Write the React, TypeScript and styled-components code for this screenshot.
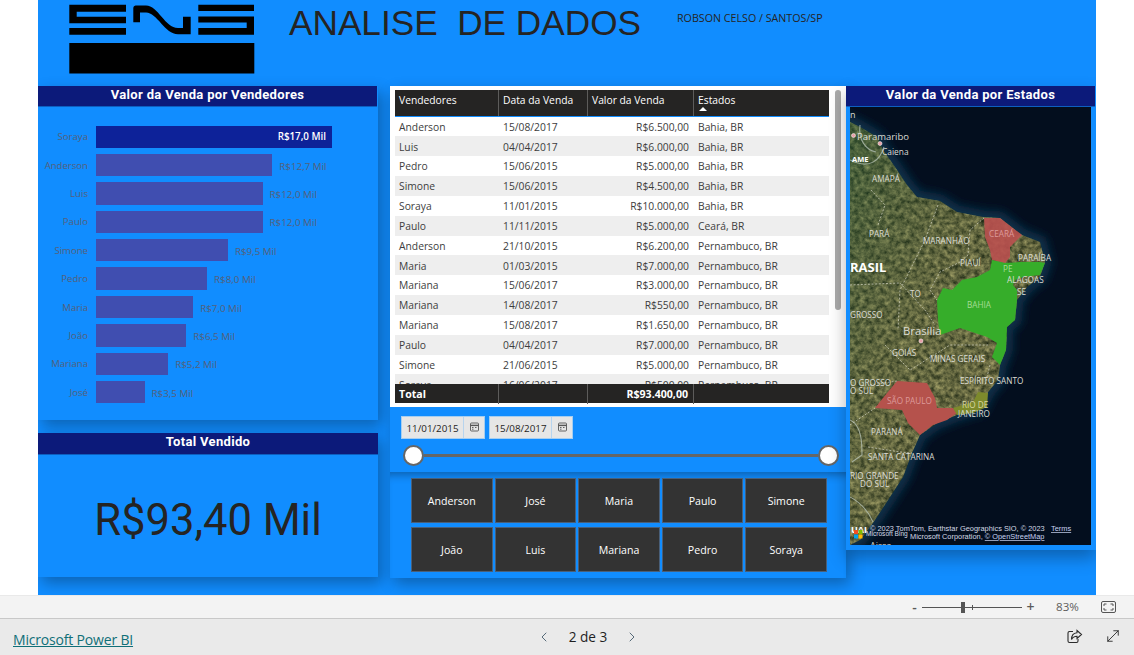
import React from "react";
import styled, { createGlobalStyle } from "styled-components";
import { ChevronLeft, ChevronRight, MoveDiagonal } from "lucide-react";

const Global = createGlobalStyle`
  html, body { margin: 0; padding: 0; background: #fff; }
  body { font-family: "Open Sans", "Liberation Sans", sans-serif; }
  * { box-sizing: border-box; }
`;

const Page = styled.div`
  width: 1134px; height: 655px; overflow: hidden; display: flex; flex-direction: column;
`;
const Canvas = styled.main`
  margin-left: 38px; width: 1058px; height: 595px; background: #118dff; flex: none; overflow: hidden;
`;
const Header = styled.header`
  height: 86px; display: flex; align-items: flex-start; padding: 4px 0 0 31px;
`;
const Logo = styled.svg`
  width: 186px; height: 70px; flex: none;
`;
const Title = styled.h1`
  margin: 0 0 0 34px; font: 400 35.2px/38px "Liberation Sans", Arial, sans-serif; color: #252423;
  white-space: pre;
`;
const Author = styled.div`
  margin: 7px 0 0 36px; font: 400 10.7px/14px "Open Sans", sans-serif; color: #252423;
`;
const Main = styled.div`
  display: flex; align-items: flex-start;
`;
const LeftColumn = styled.section`
  width: 340px; margin-right: 12px; display: flex; flex-direction: column; gap: 13px;
`;
const Card = styled.div<{ $h: number }>`
  height: ${p => p.$h}px; background: #118dff; display: flex; flex-direction: column;
  box-shadow: 4px 6px 14px rgba(0, 0, 0, .3);
`;
const CardTitle = styled.div`
  height: 21px; background: #0c1a7a; color: #fff; text-align: center; flex: none;
  font: 700 13px/18px Roboto, sans-serif; letter-spacing: .33px; border-bottom: 1px solid #0d5fc0;
  margin-right: 1px;
`;
const TotalTitle = styled(CardTitle)`
  height: 22px; margin-right: 0;
`;
const Chart = styled.div`
  padding: 18.5px 0 0 0; display: flex; flex-direction: column; gap: 6px;
`;
const BarRow = styled.div`
  height: 22.4px; display: flex; align-items: center;
`;
const BarName = styled.span`
  width: 50px; text-align: right; font: 400 9.6px/12px "Open Sans", sans-serif; color: #55607a;
  white-space: nowrap; margin-top: 1px;
`;
const Bar = styled.div<{ $top: boolean }>`
  margin-left: 8px; height: 100%; background: ${p => (p.$top ? "#0d2299" : "#404eb0")};
  display: flex; align-items: center; justify-content: flex-end; padding-right: 6px;
  font: 600 9.8px/12px "Open Sans", sans-serif; color: #fff; white-space: nowrap;
`;
const BarValue = styled.span`
  margin: 3px 0 0 7px; font: 400 9.8px/12px "Open Sans", sans-serif; color: #55607a; white-space: nowrap;
`;
const TotalValue = styled.div`
  flex: 1; display: flex; align-items: center; justify-content: center; padding-top: 9px;
  font: 400 43.5px/50px Roboto, sans-serif; color: #252423;
`;
const MiddleColumn = styled.section`
  width: 456px; flex: none; display: flex; flex-direction: column;
  box-shadow: 4px 6px 14px rgba(0, 0, 0, .3); position: relative;
`;
const TablePanel = styled.div`
  height: 321px; background: #fff; display: flex; padding: 4px 0 0 5px;
`;
const Table = styled.div`
  width: 434px; display: flex; flex-direction: column;
`;
const Rows = styled.div`
  height: 267.5px; overflow: hidden; flex: none;
`;
const gridCols = "104px 89px 106px 135px";
const HeadRow = styled.div`
  display: grid; grid-template-columns: ${gridCols}; height: 26.5px; background: #252423; flex: none;
  border-bottom: 1px solid #118dff; color: #fff;
`;
const HeadCell = styled.div<{ $last?: boolean }>`
  padding: 3px 0 0 4px; font: 400 10.3px/15px "Open Sans", sans-serif; position: relative;
  border-right: ${p => (p.$last ? "none" : "1px solid #5d5c5b")};
`;
const SortMark = styled.span`
  position: absolute; left: 5px; top: 17px; width: 0; height: 0;
  border-left: 4px solid transparent; border-right: 4px solid transparent; border-bottom: 4px solid #fff;
`;
const Row = styled.div<{ $alt: boolean }>`
  display: grid; grid-template-columns: ${gridCols}; height: 19.85px; align-items: center;
  background: ${p => (p.$alt ? "#eeeeee" : "#fff")}; color: #3d3d3d;
  font: 400 10.3px/14px "Open Sans", sans-serif; padding-top: .5px;
`;
const Cell = styled.div<{ $right?: boolean }>`
  padding: ${p => (p.$right ? "0 5px 0 0" : "0 0 0 4px")}; text-align: ${p => (p.$right ? "right" : "left")};
  white-space: nowrap;
`;
const FootRow = styled.div`
  display: grid; grid-template-columns: ${gridCols}; height: 19px; background: #252423; color: #fff; flex: none;
  font: 700 10.6px/20px "Open Sans", sans-serif;
`;
const FootCell = styled.div<{ $right?: boolean; $last?: boolean }>`
  padding: ${p => (p.$right ? "0 5px 0 0" : "0 0 0 4px")}; text-align: ${p => (p.$right ? "right" : "left")};
  border-right: ${p => (p.$last ? "none" : "1px solid #5d5c5b")};
`;
const ScrollThumb = styled.div`
  width: 6px; height: 220px; background: #a9a9a9; border-radius: 3px; margin-left: 6px; flex: none;
`;
const FilterPanel = styled.div`
  height: 65px; background: #118dff; padding: 9px 0 0 11px; display: flex; flex-direction: column;
`;
const DateRow = styled.div`
  display: flex; gap: 4px;
`;
const DateBox = styled.div`
  width: 84px; height: 23px; background: #e6e6e6; border: 1px solid #a6cef0; display: flex;
  font: 400 9.8px/21px "Open Sans", sans-serif; color: #252423;
`;
const DateText = styled.span`
  width: 62px; text-align: center; border-right: 1px solid #b7d4ee; padding-top: 1px;
`;
const CalBox = styled.span`
  flex: 1; display: flex; align-items: center; justify-content: center; padding-bottom: 2px;
`;
const SliderRow = styled.div`
  display: flex; align-items: center; margin: 5.5px 0 0 1.5px; width: 436px;
`;
const Thumb = styled.span`
  width: 21px; height: 21px; border-radius: 50%; background: #fff; border: 2px solid #666; flex: none;
`;
const Track = styled.span`
  flex: 1; height: 3px; background: #666;
`;
const ButtonPanel = styled.div`
  height: 106px; background: #118dff; padding: 6px 19px 0 21px;
  box-shadow: inset 0 9px 8px -6px rgba(0, 0, 0, .32);
`;
const ButtonGrid = styled.div`
  display: grid; grid-template-columns: repeat(5, 1fr); grid-auto-rows: 45px; column-gap: 2px; row-gap: 4px;
`;
const SlicerButton = styled.div`
  background: #333333; border: 1px solid #4a5f78; color: #fff; display: flex; align-items: center;
  justify-content: center; font: 400 10.6px/14px "Open Sans", sans-serif;
`;
const RightColumn = styled.section`
  width: 250px; flex: none; height: 464px; background: #118dff; display: flex; flex-direction: column;
  box-shadow: 0 8px 16px rgba(0, 0, 0, .3); position: relative;
`;
const MapBox = styled.div`
  height: 438px; margin: 0 5px 0 4px; overflow: hidden;
`;
const MapSvg = styled.svg`
  display: block; width: 241px; height: 438px;
`;
const ZoomBar = styled.div`
  height: 24px; background: #f3f3f3; border-top: 1px solid #e9e9e9; border-bottom: 1px solid #c8c8c8;
  display: flex; align-items: center; flex: none; padding-left: 909px; color: #605e5c;
`;
const ZoomSign = styled.span`
  width: 11px; text-align: center; font: 600 14px/14px "Open Sans", sans-serif; color: #5a5a5a;
`;
const ZoomPlus = styled(ZoomSign)`
  margin-left: 3px;
`;
const ZoomTrack = styled.span`
  width: 100px; height: 1px; background: #555; position: relative; margin-left: 2px; flex: none;
`;
const ZoomKnob = styled.span`
  position: absolute; left: 39px; top: -5px; width: 4px; height: 11px; background: #555;
`;
const ZoomTick = styled.span`
  position: absolute; left: 50px; top: -2px; width: 1px; height: 5px; background: #555;
`;
const ZoomLabel = styled.span`
  margin-left: 20px; width: 24px; font: 400 11.6px/14px "Open Sans", sans-serif; color: #605e5c;
`;
const FitIcon = styled.svg`
  margin-left: 21px; width: 15px; height: 12px;
`;
const BottomBar = styled.footer`
  flex: 1; background: #eaeaea; display: grid; grid-template-columns: 523px 104px 1fr; align-items: center;
  padding-left: 13px;
`;
const Brand = styled.a`
  font: 400 14px/18px "Open Sans", sans-serif; color: #0f6f78; text-decoration: underline; padding-top: 6px;
  letter-spacing: -.18px;
`;
const Pager = styled.div`
  display: flex; align-items: center; justify-content: space-between; color: #1f1f1f;
  font: 500 13.6px/18px "Open Sans", sans-serif;
`;
const PagerArrow = styled.span`
  display: flex; color: #4a6070;
`;
const Actions = styled.div`
  display: flex; justify-content: flex-end; gap: 21px; padding-right: 12px; align-items: center; padding-bottom: 2px;
`;

const sellers = [
  ["Soraya", 17, "R$17,0 Mil"], ["Anderson", 12.7, "R$12,7 Mil"], ["Luis", 12, "R$12,0 Mil"], ["Paulo", 12, "R$12,0 Mil"],
  ["Simone", 9.5, "R$9,5 Mil"], ["Pedro", 8, "R$8,0 Mil"], ["Maria", 7, "R$7,0 Mil"], ["João", 6.5, "R$6,5 Mil"],
  ["Mariana", 5.2, "R$5,2 Mil"], ["José", 3.5, "R$3,5 Mil"],
] as const;

const sales = [
  ["Anderson", "15/08/2017", "R$6.500,00", "Bahia, BR"], ["Luis", "04/04/2017", "R$6.000,00", "Bahia, BR"],
  ["Pedro", "15/06/2015", "R$5.000,00", "Bahia, BR"], ["Simone", "15/06/2015", "R$4.500,00", "Bahia, BR"],
  ["Soraya", "11/01/2015", "R$10.000,00", "Bahia, BR"], ["Paulo", "11/11/2015", "R$5.000,00", "Ceará, BR"],
  ["Anderson", "21/10/2015", "R$6.200,00", "Pernambuco, BR"], ["Maria", "01/03/2015", "R$7.000,00", "Pernambuco, BR"],
  ["Mariana", "15/06/2017", "R$3.000,00", "Pernambuco, BR"], ["Mariana", "14/08/2017", "R$550,00", "Pernambuco, BR"],
  ["Mariana", "15/08/2017", "R$1.650,00", "Pernambuco, BR"], ["Paulo", "04/04/2017", "R$7.000,00", "Pernambuco, BR"],
  ["Simone", "21/06/2015", "R$5.000,00", "Pernambuco, BR"], ["Soraya", "16/06/2017", "R$500,00", "Pernambuco, BR"],
];

const people = ["Anderson", "José", "Maria", "Paulo", "Simone", "João", "Luis", "Mariana", "Pedro", "Soraya"];

const landPts = "850,122 860,127 877,137 883,150 895,167 907,185 917,197 940,201 957,212 983,217 1000,218 1022,235 1040,242 1045,262 1040,277 1027,287 1017,300 1015,320 1007,327 1006,350 1000,365 998,380 988,392 980,408 957,415 937,423 920,435 912,453 903,477 890,497 877,517 870,527 860,540 850,545";

const labels: [number, number, string, number?, string?, number?][] = [
  [850, 118, "n", 9], [857, 140, "Paramaribo", 9.5], [882, 155, "Caiena", 8.4], [852, 162, "AME", 7.5, "#fff", 700], [872, 182, "AMAPÁ", 8.2],
  [869, 237, "PARÁ", 8.2], [923, 244, "MARANHÃO", 8.2], [850, 272, "RASIL", 13, "#fff", 700], [960, 266, "PIAUÍ", 8.2],
  [989, 237, "CEARÁ", 8.2, "#dd9a9a"], [1018, 261, "PARAÍBA", 8.2], [1003, 272, "PE", 8.2, "#a5dc95"], [1007, 283, "ALAGOAS", 8.2],
  [1017, 295, "SE", 8.2], [967, 308, "BAHIA", 8.2, "#a5dc95"], [910, 297, "TO", 8.2], [850, 318, "GROSSO", 8.2],
  [903, 335, "Brasília", 11.3], [892, 356, "GOIÁS", 8.2], [930, 362, "MINAS GERAIS", 8.2], [960, 384, "ESPÍRITO SANTO", 8.2],
  [850, 386, "O GROSSO", 8.2], [850, 394, "O SUL", 8.2], [887, 404, "SÃO PAULO", 8.2, "#dd9a9a"], [962, 408, "RIO DE", 8.2, "#d8d8a0"],
  [958, 417, "JANEIRO", 8.2], [871, 435, "PARANÁ", 8.2], [868, 460, "SANTA CATARINA", 8.2], [850, 479, "RIO GRANDE", 8.2], [860, 487, "DO SUL", 8.2],
  [851, 533, "UAI", 9, "#fff", 700], [870, 549, "Aires", 9],
];

const MapDrawing = () => (
  <MapSvg viewBox="850 107 241 438">
    <defs>
      <filter id="landTex" x="0" y="0" width="100%" height="100%" colorInterpolationFilters="sRGB">
        <feTurbulence type="fractalNoise" baseFrequency="0.2" numOctaves="4" seed="7" />
        <feColorMatrix values="0.8 0 0 0 0.02  0.72 0 0 0 0.06  0.5 0 0 0 0.01  0 0 0 0 1" />
        <feComposite in2="SourceAlpha" operator="in" />
      </filter>
      <filter id="seaBlur"><feGaussianBlur stdDeviation="5" /></filter>
      <linearGradient id="amazon" x1="0" y1="0" x2="1" y2="1">
        <stop offset="0" stopColor="#1c5030" stopOpacity=".5" />
        <stop offset=".4" stopColor="#35502f" stopOpacity=".2" />
        <stop offset="1" stopColor="#5a5038" stopOpacity=".1" />
      </linearGradient>
    </defs>
    <rect x="850" y="107" width="241" height="438" fill="#030e1e" />
    <polygon points={landPts} fill="none" stroke="#10304c" strokeWidth="13" filter="url(#seaBlur)" />
    <polygon points={landPts} fill="#5a6248" filter="url(#landTex)" />
    <polygon points={landPts} fill="url(#amazon)" />
    <polygon points="984,218 1000,218 1022,235 1010,247 1010,257 1005,263 992,260 990,250 985,237" fill="#b9504f" fillOpacity=".9" />
    <polygon points="992,260 1005,263 1020,262 1040,262 1045,263 1040,275 1023,277 1015,280 1013,285 1017,290 1017,300 1015,320 1007,327 1006,350 1000,365 992,357 997,343 987,337 960,328 940,335 938,320 937,300 943,288 952,290 962,280 977,277 990,270" fill="#36ad2a" />
    <polygon points="897,381 927,383 935,398 937,408 953,408 957,413 947,420 933,425 920,435 908,423 902,410 875,408 883,398" fill="#b5524c" />
    <polygon points="953,408 973,402 978,392 988,393 987,407 973,413 957,415" fill="#7d8a2c" />
    <g fill="none" stroke="#d9d9c9" strokeWidth=".8" strokeDasharray="2 1.6" opacity=".85">
      <polyline points="871,190 885,205 878,225" />
      <polyline points="938,205 925,240 900,290 898,330" />
      <polyline points="984,218 970,230 968,255 960,262 940,272 930,290 937,300" />
      <polyline points="850,285 900,283 925,310 935,325" />
      <polyline points="885,345 910,370 950,345 990,345" />
      <polyline points="870,385 897,381" />
      <polyline points="850,425 875,408" />
      <polyline points="868,447 900,452 912,453" />
      <polyline points="990,365 985,385" />
    </g>
    <g fill="none" stroke="#b8c4b8" strokeWidth="1.1" opacity=".75">
      <path d="M850 160 C870 170 880 160 884 147" />
      <path d="M860 125 C858 140 866 150 876 152" />
      <path d="M850 420 C862 425 862 445 862 455 L852 462" />
      <path d="M850 497 C865 505 870 515 873 522" />
    </g>
    <circle cx="853.5" cy="135.5" r="2" fill="#e8a0a8" stroke="#fff" strokeWidth=".5" />
    <circle cx="880" cy="143.5" r="2" fill="#e8a0a8" stroke="#fff" strokeWidth=".5" />
    <circle cx="921" cy="341" r="2" fill="#e8a0a8" stroke="#fff" strokeWidth=".5" />
    <g fontFamily="Open Sans, sans-serif">
      {labels.map(([x, y, t, s, c, w]) => (
        <text key={t + x} x={x} y={y} fontSize={s ?? 8.2} fill={c ?? "#dcdcd4"} fontWeight={w ?? 400}>{t}</text>
      ))}
    </g>
    <g fontFamily="Liberation Sans, sans-serif" fill="#d5dbe6">
      <text x="870" y="531" fontSize="7.4">© 2023 TomTom, Earthstar Geographics SIO, © 2023</text>
      <text x="1051" y="531" fontSize="7.4" textDecoration="underline" fill="#c8d2f0">Terms</text>
      <text x="910" y="539" fontSize="7.4">Microsoft Corporation, <tspan textDecoration="underline" fill="#c8d2f0">© OpenStreetMap</tspan></text>
      <text x="866" y="536" fontSize="6.6">Microsoft Bing</text>
    </g>
    <rect x="854" y="530" width="4" height="4" fill="#f25022" />
    <rect x="858.5" y="530" width="4" height="4" fill="#7fba00" />
    <rect x="854" y="534.5" width="4" height="4" fill="#00a4ef" />
    <rect x="858.5" y="534.5" width="4" height="4" fill="#ffb900" />
  </MapSvg>
);

const CalIcon = () => (
  <svg width="9" height="10" viewBox="0 0 9 10" fill="none" stroke="#555" strokeWidth=".9">
    <rect x=".5" y="1" width="8" height="8" rx="1" />
    <path d="M.5 3.4h8" strokeWidth="1.4" />
    <path d="M2 5.5h1.5M5 5.5h1.5M2 7.2h1.5" />
  </svg>
);

export default function App() {
  return (
    <Page>
      <Global />
      <Canvas>
        <Header>
          <Logo viewBox="69 4 186 70">
            <path fill="#000" d="M69.3 4.700H126V11.700H76.700V16.700H126V23.300H69.300ZM69.300 28H126V34.700H69.300Z" />
            <path fill="#000" d="M198.300 4.700H254V11H198.300ZM198.300 16.500H254V34.700H198.300V28H246.700V22.500H198.300Z" />
            <path fill="#000" d="M133.300 8C133.300 6 135 5.500 137 5.500H146C158 5.500 165 28 178 28H183V16.700H190.700V34.300H178C165 34.300 157 12.500 146 12.500H140V22.300H133.300Z" />
            <rect x="69.300" y="43" width="185" height="30.500" fill="#000" />
          </Logo>
          <Title>ANALISE  DE DADOS</Title>
          <Author>ROBSON CELSO / SANTOS/SP</Author>
        </Header>
        <Main>
          <LeftColumn>
            <Card $h={334}>
              <CardTitle>Valor da Venda por Vendedores</CardTitle>
              <Chart>
                {sellers.map(([name, v, text], i) => (
                  <BarRow key={name}>
                    <BarName>{name}</BarName>
                    <Bar $top={i === 0} style={{ width: (v / 17) * 236 }}>{i === 0 ? text : null}</Bar>
                    {i > 0 && <BarValue>{text}</BarValue>}
                  </BarRow>
                ))}
              </Chart>
            </Card>
            <Card $h={144}>
              <TotalTitle>Total Vendido</TotalTitle>
              <TotalValue>R$93,40 Mil</TotalValue>
            </Card>
          </LeftColumn>
          <MiddleColumn>
            <TablePanel>
              <Table>
                <HeadRow>
                  <HeadCell>Vendedores</HeadCell>
                  <HeadCell>Data da Venda</HeadCell>
                  <HeadCell>Valor da Venda</HeadCell>
                  <HeadCell $last>Estados<SortMark /></HeadCell>
                </HeadRow>
                <Rows>
                  {sales.map((r, i) => (
                    <Row key={i} $alt={i % 2 === 1}>
                      <Cell>{r[0]}</Cell>
                      <Cell>{r[1]}</Cell>
                      <Cell $right>{r[2]}</Cell>
                      <Cell>{r[3]}</Cell>
                    </Row>
                  ))}
                </Rows>
                <FootRow>
                  <FootCell>Total</FootCell>
                  <FootCell />
                  <FootCell $right>R$93.400,00</FootCell>
                  <FootCell $last />
                </FootRow>
              </Table>
              <ScrollThumb />
            </TablePanel>
            <FilterPanel>
              <DateRow>
                <DateBox><DateText>11/01/2015</DateText><CalBox><CalIcon /></CalBox></DateBox>
                <DateBox><DateText>15/08/2017</DateText><CalBox><CalIcon /></CalBox></DateBox>
              </DateRow>
              <SliderRow><Thumb /><Track /><Thumb /></SliderRow>
            </FilterPanel>
            <ButtonPanel>
              <ButtonGrid>
                {people.map(p => <SlicerButton key={p}>{p}</SlicerButton>)}
              </ButtonGrid>
            </ButtonPanel>
          </MiddleColumn>
          <RightColumn>
            <CardTitle>Valor da Venda por Estados</CardTitle>
            <MapBox><MapDrawing /></MapBox>
          </RightColumn>
        </Main>
      </Canvas>
      <ZoomBar>
        <ZoomSign>-</ZoomSign>
        <ZoomTrack><ZoomKnob /><ZoomTick /></ZoomTrack>
        <ZoomPlus>+</ZoomPlus>
        <ZoomLabel>83%</ZoomLabel>
        <FitIcon viewBox="0 0 15 12" fill="none" stroke="#555" strokeWidth="1">
          <rect x=".5" y=".5" width="14" height="11" rx="1.5" />
          <path d="M3 5V3h2.500M12 5V3H9.500M3 7v2h2.500M12 7v2H9.500" />
        </FitIcon>
      </ZoomBar>
      <BottomBar>
        <Brand>Microsoft Power BI</Brand>
        <Pager>
          <PagerArrow><ChevronLeft size={16} strokeWidth={1.4} /></PagerArrow>
          <span>2 de 3</span>
          <PagerArrow><ChevronRight size={16} strokeWidth={1.4} /></PagerArrow>
        </Pager>
        <Actions>
          <svg width="16" height="15" viewBox="0 0 16 15" fill="none" stroke="#2b2b2b" strokeWidth="1.1">
            <path d="M6 2.500H2.500a1.500 1.500 0 0 0-1.500 1.500v8a1.500 1.500 0 0 0 1.500 1.500h7a1.500 1.500 0 0 0 1.500-1.500V10" />
            <path d="M10 1.500 14.500 5.500 10 9.500V7.300C7.500 7.300 5.500 8.500 4.500 10.500 4.500 7 6.500 4 10 3.700Z" />
          </svg>
          <MoveDiagonal size={18} strokeWidth={1.2} color="#2b2b2b" />
        </Actions>
      </BottomBar>
    </Page>
  );
}
